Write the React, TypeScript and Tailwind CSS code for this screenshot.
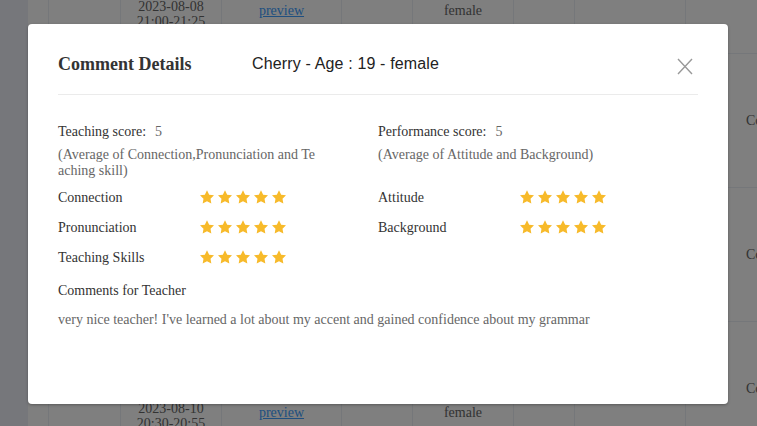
import React from "react";

const serif = { fontFamily: '"Liberation Serif", "Times New Roman", serif' };

const rows = [
  { date: "2023-08-08", time: "21:00-21:25", gender: "female" },
  { date: "2023-08-09", time: "19:00-19:25", gender: "female" },
  { date: "2023-08-09", time: "20:00-20:25", gender: "male" },
  { date: "2023-08-10", time: "20:30-20:55", gender: "female" },
];

function Star() {
  return (
    <svg className="w-[14px] h-[14px]" viewBox="2 2 20 19.3" fill="#f7ba2a">
      <path d="M12 2l3.09 6.26L22 9.27l-5 4.87 1.18 6.88L12 17.77l-6.18 3.25L7 14.14 2 9.27l6.91-1.01L12 2z" />
    </svg>
  );
}

function Rate() {
  return (
    <div className="flex items-center gap-[4px]">
      {[0, 1, 2, 3, 4].map((i) => (
        <Star key={i} />
      ))}
    </div>
  );
}

function RateRow({ label }: { label: string }) {
  return (
    <div className="flex items-center h-[30px]">
      <span className="w-[142px] text-[#333]">{label}</span>
      <Rate />
    </div>
  );
}

function ScoreBlock({ title, note }: { title: string; note: string }) {
  return (
    <div className="h-[60px]">
      <div className="leading-[20px] text-[#333]">
        {title}
        <span className="ml-[9px] text-[#666]">5</span>
      </div>
      <div className="mt-[5px] w-[260px] leading-[16px] text-[#666] break-all">{note}</div>
    </div>
  );
}

export default function App() {
  return (
    <div className="relative w-[757px] h-[426px] overflow-hidden bg-[#eceef6] text-[14px]" style={serif}>
      {/* page behind the dialog */}
      <div className="flex h-full">
        <div className="w-[28px] shrink-0" />
        <div className="w-[658px] shrink-0 bg-white">
          <div className="-mt-[56px]">
            {rows.map((r, i) => (
              <div key={i} className="flex h-[134px] border-b border-[#ebeef5] text-[#666]">
                <div className="w-[21px] border-r border-[#ebeef5]" />
                <div className="w-[72px] border-r border-[#ebeef5]" />
                <div className="w-[101px] border-r border-[#ebeef5] flex flex-col items-center justify-center leading-[15px] pt-[6px]">
                  <span>{r.date}</span>
                  <span>{r.time}</span>
                </div>
                <div className="w-[120px] border-r border-[#ebeef5] flex items-center justify-center">
                  <span className="text-[#409eff] underline">preview</span>
                </div>
                <div className="w-[71px] border-r border-[#ebeef5]" />
                <div className="w-[101px] border-r border-[#ebeef5] flex items-center justify-center">
                  {r.gender}
                </div>
                <div className="w-[61px] border-r border-[#ebeef5]" />
                <div className="w-[111px] border-r border-[#ebeef5]" />
              </div>
            ))}
          </div>
        </div>
        <div className="flex-1 bg-white">
          <div className="-mt-[80px]">
            {[0, 1, 2, 3].map((i) => (
              <div key={i} className="flex items-center h-[134px] border-b border-[#ebeef5] pl-[60px] text-[#666] whitespace-nowrap">
                Completed
              </div>
            ))}
          </div>
        </div>
      </div>

      {/* overlay */}
      <div className="absolute inset-0 bg-black/50" />

      {/* dialog */}
      <div className="absolute inset-0 pt-[24px] pl-[28px]">
        <div className="w-[700px] h-[380px] bg-white rounded-[4px] shadow-[0_1px_3px_rgba(0,0,0,0.3)] px-[30px]">
          <div className="flex items-center h-[24px] pt-[28px] pb-[18px] border-b border-[#ebebeb] box-content">
            <span className="w-[194px] text-[18px] font-bold text-[#333] leading-[24px]">Comment Details</span>
            <span
              className="text-[16px] tracking-[0.15px] text-[#222] leading-[24px]"
              style={{ fontFamily: '"Liberation Sans", Arial, sans-serif' }}
            >
              Cherry - Age : 19 - female
            </span>
            <svg className="ml-auto mr-[5px] mt-[4px] w-[16px] h-[17px]" viewBox="0 0 16 17" fill="none" stroke="#999" strokeWidth="1.4">
              <path d="M1 1L15 16M15 1L1 16" />
            </svg>
          </div>

          <div className="pt-[27px]">
            <div className="flex">
              <div className="w-[320px]">
                <ScoreBlock title="Teaching score:" note="(Average of Connection,Pronunciation and Teaching skill)" />
                <RateRow label="Connection" />
                <RateRow label="Pronunciation" />
                <RateRow label="Teaching Skills" />
              </div>
              <div className="flex-1">
                <ScoreBlock title="Performance score:" note="(Average of Attitude and Background)" />
                <RateRow label="Attitude" />
                <RateRow label="Background" />
              </div>
            </div>
            <div className="mt-[9px] leading-[20px] text-[#333]">Comments for Teacher</div>
            <div className="mt-[9px] leading-[20px] text-[#666]">
              very nice teacher! I've learned a lot about my accent and gained confidence about my grammar
            </div>
          </div>
        </div>
      </div>
    </div>
  );
}
